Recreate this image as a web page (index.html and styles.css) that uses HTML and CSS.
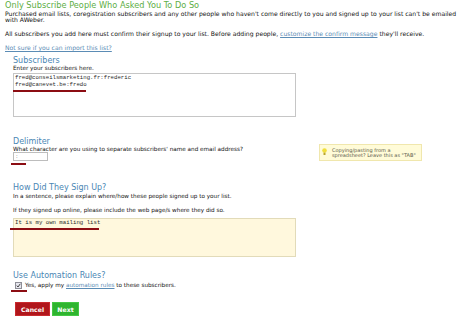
FILE: index.html
```html
<!DOCTYPE html>
<html lang="en">
<head>
  <meta charset="UTF-8">
  <title>Import Subscribers</title>
  <link rel="stylesheet" href="styles.css">
</head>
<body>
  <div class="page">
    <h1>Only Subscribe People Who Asked You To Do So</h1>
    <p class="intro intro-first">Purchased email lists, coregistration subscribers and any other people who haven't come directly to you and signed up to your list can't be emailed with AWeber.</p>
    <p class="intro">All subscribers you add here must confirm their signup to your list. Before adding people, <a href="#">customize the confirm message</a> they'll receive.</p>
    <p class="intro"><a href="#">Not sure if you can import this list?</a></p>

    <form class="import-form">
      <!-- Subscribers -->
      <div class="field field-subs">
        <h2>Subscribers</h2>
        <label class="hint">Enter your subscribers here.</label>
        <div class="box box-subs">
          <div class="box-line">fred@conseilsmarketing.fr:frederic</div>
          <div class="box-line">fred@canevet.be:fredo</div>
          <span class="mark mark-subs"></span>
        </div>
      </div>

      <!-- Delimiter -->
      <div class="field field-delim">
        <h2>Delimiter</h2>
        <label class="hint">What character are you using to separate subscribers' name and email address?</label>
        <div class="delim-row">
          <div class="delim-input">:</div>
          <div class="tip">
            <svg class="bulb" width="5" height="8" viewBox="0 0 5 8">
              <circle cx="2.5" cy="2.5" r="2.3" fill="#f0de3c"/>
              <rect x="1.5" y="4.6" width="2" height="2.4" fill="#b9a52c"/>
            </svg>
            <span class="tip-text">Copying/pasting from a<br>spreadsheet? Leave this as "TAB"</span>
          </div>
        </div>
        <span class="mark mark-delim"></span>
      </div>

      <!-- Sign up -->
      <div class="field field-signup">
        <h2>How Did They Sign Up?</h2>
        <p class="hint hint-first">In a sentence, please explain where/how these people signed up to your list.</p>
        <p class="hint hint-second">If they signed up online, please include the web page/s where they did so.</p>
        <div class="box box-cream">
          <div class="box-line">It is my own mailing list</div>
          <span class="mark mark-signup"></span>
        </div>
      </div>

      <!-- Automation -->
      <div class="field field-rules">
        <h2>Use Automation Rules?</h2>
        <div class="check-row">
          <svg class="check" width="7" height="7" viewBox="0 0 7 7">
            <rect x="0.5" y="0.5" width="6" height="6" fill="#e6e6ee" stroke="#8e8e96"/>
            <path d="M1.8 3.6 L3 5 L5.3 1.8" fill="none" stroke="#333" stroke-width="0.9"/>
          </svg>
          <span>Yes, apply my <a href="#">automation rules</a> to these subscribers.</span>
        </div>
        <span class="mark mark-check"></span>
      </div>

      <div class="actions">
        <button type="button" class="btn btn-cancel">Cancel</button>
        <button type="button" class="btn btn-next">Next</button>
      </div>
    </form>
  </div>
</body>
</html>
```

FILE: styles.css
```css
/* General Styles */
body {
  margin: 0;
  background-color: #fff;
  font-family: "DejaVu Sans", Verdana, sans-serif;
  color: #121212;
}

.page {
  padding: 1px 0 0 5px;
}

h1 {
  margin: 0;
  font-size: 8.2px;
  font-weight: normal;
  line-height: 9px;
  color: #5dae45;
}

.intro {
  margin: 8px 0 0;
  font-size: 6.1px;
  line-height: 6px;
}

.intro-first {
  margin-top: 1px;
}

a {
  color: #5b8cb5;
}

.import-form {
  padding-left: 8px;
}

.field {
  position: relative;
}

h2 {
  margin: 0;
  font-size: 8px;
  font-weight: normal;
  line-height: 9px;
  color: #4a86b4;
}

.hint {
  display: block;
  margin: 0;
  font-size: 5.7px;
  line-height: 6px;
}

.box {
  position: relative;
  box-sizing: border-box;
  width: 283px;
  padding: 0 1px;
  border: 1px solid #c6c6c6;
  font-family: "Liberation Mono", "Courier New", monospace;
  font-size: 5.7px;
  line-height: 7px;
  color: #2a2a2a;
}

.box-subs {
  height: 44px;
  margin-top: 2px;
}

.box-cream {
  height: 39px;
  margin-top: 5px;
  background-color: #fff8dd;
  border-color: #e2dbb9;
}

/* red underlines drawn over the screenshot */
.mark {
  position: absolute;
  height: 2px;
  background-color: #8c0d13;
}

.field-subs {
  margin-top: 5px;
}

.mark-subs {
  left: -1px;
  top: 16px;
  width: 73px;
}

.field-delim {
  margin-top: 20px;
}

.delim-row {
  display: flex;
  align-items: flex-start;
}

.delim-input {
  box-sizing: border-box;
  width: 35px;
  height: 9px;
  padding-left: 2px;
  border: 1px solid #bdbdbd;
  font-size: 5px;
  line-height: 7px;
}

.tip {
  display: flex;
  align-items: flex-start;
  gap: 5px;
  box-sizing: border-box;
  width: 103px;
  height: 17px;
  margin: -8px 0 0 271px;
  padding: 2px 3px 0 2px;
  background-color: #fffbd8;
  border: 1px solid #f0e7ad;
  color: #5a5a4a;
}

.bulb {
  flex-shrink: 0;
  margin-top: 1px;
}

.tip-text {
  padding-top: 1px;
  font-size: 5px;
  line-height: 5px;
  white-space: nowrap;
}

.mark-delim {
  left: -2px;
  top: 26px;
  width: 15px;
}

.field-signup {
  margin-top: 22px;
}

.hint-first {
  margin-top: 1px;
}

.hint-second {
  margin-top: 8px;
}

.mark-signup {
  left: -4px;
  top: 9px;
  width: 89px;
}

.field-rules {
  margin-top: 14px;
}

.check-row {
  display: flex;
  align-items: center;
  gap: 3px;
  margin: 1px 0 0 2px;
  font-size: 5.7px;
  line-height: 8px;
}

.mark-check {
  left: -2px;
  top: 19px;
  width: 16px;
}

.actions {
  display: flex;
  gap: 2px;
  margin: 13px 0 0 2px;
}

.btn {
  height: 14px;
  padding: 0;
  border: none;
  font-family: "DejaVu Sans", Verdana, sans-serif;
  font-size: 6.2px;
  font-weight: bold;
  color: #fff;
  cursor: pointer;
}

.btn-cancel {
  width: 35px;
  background-color: #b0161b;
  box-shadow: inset 0 0 0 1px #c92a2e;
}

.btn-next {
  width: 27px;
  background-color: #2eb52e;
  box-shadow: inset 0 0 0 1px #44c744;
}
```
